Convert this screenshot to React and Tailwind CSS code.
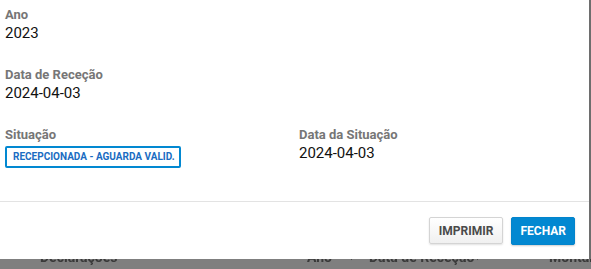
import React from 'react';

const font = { fontFamily: 'Roboto, "Liberation Sans", Arial, sans-serif' };

function Field({ label, value, children }) {
  return (
    <div>
      <div className="text-[13px] leading-[16px] font-bold text-[#767676]">{label}</div>
      {value && <div className="text-[15px] leading-[20px] text-[#111]">{value}</div>}
      {children}
    </div>
  );
}

export default function App() {
  return (
    <div className="w-[591px] h-[269px] bg-[#7f7f7f] flex flex-col overflow-hidden" style={font}>
      {/* modal */}
      <div className="flex h-[259px] shrink-0">
        <div className="w-[589px] bg-white flex flex-col">
          <div className="pl-[5px] pt-[7px] h-[201px] shrink-0 flex flex-col gap-6">
            <Field label="Ano" value="2023" />
            <Field label="Data de Receção" value="2024-04-03" />
            <div className="grid grid-cols-[294px_1fr]">
              <Field label="Situação">
                <span className="inline-flex items-center h-[22px] w-[176px] border-2 border-[#0288d1] rounded-[2px] px-[6px] text-[10px] font-bold text-[#1a6cc2] uppercase whitespace-nowrap">
                  Recepcionada - Aguarda Valid.
                </span>
              </Field>
              <Field label="Data da Situação" value="2024-04-03" />
            </div>
          </div>

          <div className="border-t border-[#e3e3e3] flex-1 flex justify-end items-start gap-2 pt-[15px] pr-[14px]">
            <button className="h-[27px] px-[9px] border border-[#d4d4d4] rounded-[2px] bg-gradient-to-b from-white to-[#f0f0f0] shadow-[0_1px_2px_rgba(0,0,0,0.12)] text-[12px] font-bold text-[#4a4a4a]">
              IMPRIMIR
            </button>
            <button className="h-[28px] px-[8px] border border-[#0284cc] rounded-[2px] bg-[#0288d1] shadow-[0_1px_2px_rgba(0,0,0,0.2)] text-[12px] font-bold text-white">
              FECHAR
            </button>
          </div>
        </div>
        <div className="flex-1 bg-[#6e6e6e]" />
      </div>

      {/* page behind the overlay */}
      <div className="h-[10px] overflow-hidden">
        <div className="flex items-start mt-[-12px] text-[14px] leading-[20px] font-bold text-[#3a3a3a] blur-[0.4px] whitespace-nowrap">
          <span className="shrink-0 ml-[40px] w-[267px]">Declarações</span>
          <span className="shrink-0 w-[40px]">Ano</span>
          <span className="shrink-0 text-[9px] leading-[20px] w-[22px]">▼</span>
          <span className="shrink-0 w-[104px]">Data de Receção</span>
          <span className="shrink-0 text-[9px] leading-[20px] w-[76px]">▼</span>
          <span className="shrink-0">Montante</span>
        </div>
      </div>
    </div>
  );
}
